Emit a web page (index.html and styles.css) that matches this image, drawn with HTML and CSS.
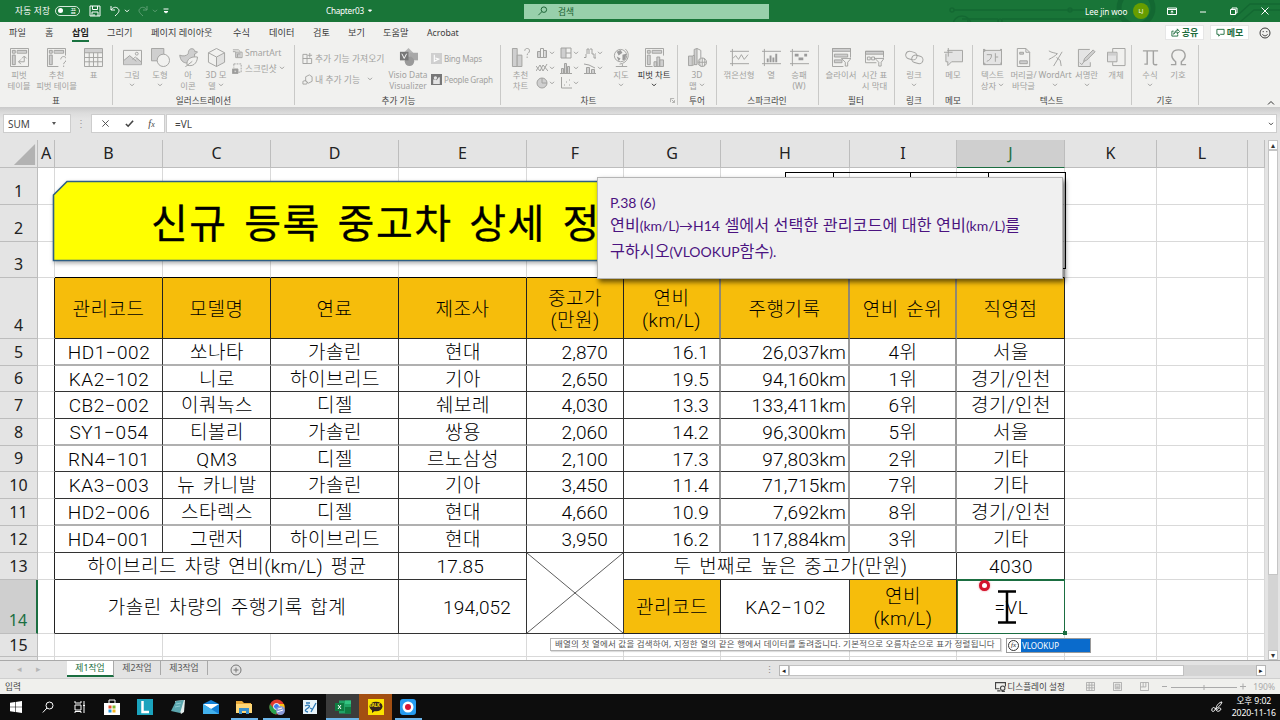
FILE: index.html
```html
<!DOCTYPE html>
<html lang="ko">
<head>
<meta charset="utf-8">
<title>Chapter03 - Excel</title>
<link rel="stylesheet" href="styles.css">
</head>
<body>
<svg class="defs" aria-hidden="true">
  <symbol id="chev" viewBox="0 0 6 4"><path d="M1 .8l2 2 2-2"/></symbol>
  <symbol id="bars" viewBox="0 0 12 12"><path class="f" d="M1.500 4.500h3v6h-3zM8.500 3.500h2v7h-2z"/><path d="M1.500 4.500h3v6h-3zM4.500 1.500h3v9h-3zM7.500 3.500h3v7h-3z"/></symbol>
</svg>
<div class="app">

<header class="titlebar">
  <svg class="deco" viewBox="0 0 340 22"><path d="M14 10H150M22 19H58M28 22a14 9 0 0 1 0-2M290 22l20-18h30M300 22l14-12h26M62 19H180M150 10l20 4"/><circle cx="12" cy="10" r="2"/><circle cx="130" cy="10" r="2"/><circle cx="22" cy="25" r="9"/><circle cx="196" cy="8" r="17" stroke-width="5"/><circle cx="60" cy="21" r="2"/></svg>
  <span class="autosave">자동 저장</span>
  <span class="toggle"><i></i><b>끔</b></span>
  <svg class="qa save" viewBox="0 0 12 12"><path d="M1 1h10v10H1zM3.500 1v3.500h5V1M3 11V7h6v4M5 9v2"/></svg>
  <svg class="qa undo" viewBox="0 0 12 12"><path d="M2 1v4h4M2 5c2-3 5-3.500 7-1.500s1 4-3 7.500"/></svg>
  <svg class="ch white"><use href="#chev"/></svg>
  <svg class="qa redo" viewBox="0 0 12 12"><path d="M10 1v4H6M10 5c-2-3-5-3.500-7-1.500s-1 4 3 7.500"/></svg>
  <svg class="ch dim"><use href="#chev"/></svg>
  <svg class="custom" viewBox="0 0 6 6"><path d="M.5 1h5M1 3.500l2 1.500 2-1.500z"/></svg>
  <span class="doc">Chapter03</span><svg class="ch white docch" viewBox="0 0 6 4"><path class="solid" d="M1.500 1h3L3 2.600z"/></svg>
  <div class="search"><svg viewBox="0 0 12 12"><circle cx="7.500" cy="4" r="3"/><path d="M5.300 6.200L1.500 10"/></svg><span>검색</span></div>
  <span class="user">Lee jin woo</span><span class="avatar">LJ</span>
  <div class="winbtns">
    <svg viewBox="0 0 10 10"><path d="M.5 2h9v6.500h-9zM.5 3.500h9M5 7.500V5M3.700 6L5 4.800 6.300 6"/></svg>
    <svg viewBox="0 0 10 10"><path d="M2 6h6"/></svg>
    <svg viewBox="0 0 10 10"><path d="M1.500 3.500h5v5h-5zM3 3.500V2h5v5H6.500"/></svg>
    <svg viewBox="0 0 10 10"><path d="M1.500 1.500l7 7M8.500 1.500l-7 7"/></svg>
  </div>
</header>

<nav class="tabs">
  <span class="t1">파일</span><span class="t2">홈</span><span class="t3 on">삽입</span><span class="t4">그리기</span><span class="t5">페이지 레이아웃</span><span class="t6">수식</span><span class="t7">데이터</span><span class="t8">검토</span><span class="t9">보기</span><span class="t10">도움말</span><span class="t11">Acrobat</span>
  <div class="tabright">
    <span class="share"><svg viewBox="0 0 10 10"><path d="M3 3.500H1v5.500h6.500V7M3 7c.5-3 2-4 4-4V1l2.500 3L7 6.500v-2C5.500 4.500 4 5 3 7z"/></svg>공유</span>
    <span class="share"><svg viewBox="0 0 10 10"><path d="M1 1.500h8v5.500H5L3 9V7H1z"/></svg>메모</span>
    <svg class="smile" viewBox="0 0 12 12"><circle cx="6" cy="6" r="5"/><path d="M3.500 7.300c1 2 4 2 5 0M4.200 4v1.200M7.800 4v1.200"/></svg>
  </div>
</nav>

<section class="ribbon">
  <div class="grp g1">
    <div class="items">
      <div class="it w38"><svg viewBox="0 0 20 20"><path class="f" d="M2 2h4v3H2zM8 2h10v3H8zM2 7h4v11H2z"/><path d="M.5.5h19v19H.5zM2.500 2.500h3v3h-3zM7.500 2.500h10v3h-10zM2.500 7.500h3v10h-3zM9 14.500h6V9M11.500 12L9 14.500l2.500 2.500M12.500 11L15 8.500l2.500 2.500"/></svg><p>피벗<br>테이블</p></div>
      <div class="it w37"><svg viewBox="0 0 20 20"><path class="f" d="M2 2h4v3H2zM8 2h10v3H8zM2 7h4v11H2z"/><path d="M12 19.500H.5V.5h19V8M2.500 2.500h3v3h-3zM7.500 2.500h10v3h-10zM2.500 7.500h3v10h-3zM14.500 12c0-4 6-4 6 0 0 3-3 2.500-3 5M17.500 18.500v1.500"/></svg><p>추천<br>피벗 테이블</p></div>
      <div class="it w37"><svg viewBox="0 0 20 20"><path class="f" d="M1 1h18v4H1z"/><path d="M.5.5h19v19H.5zM.5 5h19M.5 10h19M.5 14.500h19M5.500 5v14M10 5v14M14.500 5v14"/></svg><p>표</p></div>
    </div><h6>표</h6>
  </div>
  <div class="grp g2">
    <div class="items">
      <div class="it w28"><svg viewBox="0 0 20 20"><path d="M.5 2.500h19v15H.5z"/><path class="f" d="M1 13l6-5 5 4 3-2 4 4v3H1z"/><path d="M1 13l6-5 7 6M10 12l3-2.500 6 5"/><circle cx="14.500" cy="6" r="1.500"/></svg><p>그림<br><svg class="ch"><use href="#chev"/></svg></p></div>
      <div class="it w28"><svg viewBox="0 0 20 20"><path class="f s" d="M.5.5h13v13H.5z"/><circle class="w" cx="13" cy="13" r="6.500"/></svg><p>도형<br><svg class="ch"><use href="#chev"/></svg></p></div>
      <div class="it w28"><svg viewBox="0 0 20 20"><path class="f s" d="M.8 7.500c3 1.500 7 1 9-1.500 0-4 2-6 5-5 1.500.5 2 2 1.800 2.800l2.700.2c-.5 1.500-1.500 2-3 2.300 1 6-3 9.500-8 9.500-4 0-7-3-7.500-8.300z"/><path class="w" d="M8.500 18c-1-6 4-9.500 11-8.500-.5 7-5 10.500-11 8.500zM6.500 20l7.500-6"/></svg><p>아<br>이콘</p></div>
      <div class="it w28"><svg viewBox="0 0 20 20"><path class="f" d="M10 10l8.500-5v10L10 19.500z" opacity=".45"/><path d="M10 .5L18.500 5v10L10 19.500 1.500 15V5zM1.500 5l8.500 4.500L18.500 5M10 9.500v10"/></svg><p>3D 모<br>델 <svg class="ch"><use href="#chev"/></svg></p></div>
      <div class="col smart"><span><svg viewBox="0 0 12 10"><path class="f" d="M4 4h6v5H4z"/><path d="M1 1h6l2 2M1 3h3M4 3.500h7v6H4zM6 9V5.500h3"/></svg>SmartArt</span><span><svg viewBox="0 0 12 12"><path stroke-dasharray="2 1" d="M2 1h8v9H7M2 1v4"/><path class="d s" d="M.5 6.500h6v5h-6z"/><circle class="w" cx="3.500" cy="9" r="1.200"/></svg>스크린샷 <svg class="ch"><use href="#chev"/></svg></span></div>
    </div><h6>일러스트레이션</h6>
  </div>
  <div class="grp g3">
    <div class="items">
      <div class="col addin"><span><svg viewBox="0 0 12 12"><path d="M1 1.500h4.500v10H1zM1 6h9.500v5.500H1M8.500 0v5M6 2.500h5"/></svg>추가 기능 가져오기</span><span><svg viewBox="0 0 12 12"><path d="M4 3l4-2 3 2v5L7 10 4 8zM1 8l3-1 2 2-1 2H1z"/></svg>내 추가 기능 &nbsp;<svg class="ch"><use href="#chev"/></svg></span></div>
      <div class="it w46"><svg viewBox="0 0 20 20"><path class="m" d="M10 0l5 5-5 5-5-5z"/><path class="f2" d="M11 5h9v8h-9z"/><circle class="d" cx="11" cy="14" r="5"/><path class="dd" d="M1 4h9v9H1z"/><path class="wh" d="M3 6l2.500 5L8 6"/></svg><p>Visio Data<br>Visualizer</p></div>
      <div class="col bing"><span><svg viewBox="0 0 10 10"><path class="f" d="M0 0h10v10H0z"/><path class="wh" d="M3 1.500v6l4-2-3-1"/></svg>Bing Maps</span><span><svg viewBox="0 0 10 10"><path class="dd" d="M0 0h10v10H0z"/><circle class="l" cx="4" cy="3.500" r="1.500"/><path class="l" d="M2 9V5h3v1l2-3h1v6z"/></svg>People Graph</span></div>
    </div><h6>추가 기능</h6>
  </div>
  <div class="grp g4">
    <div class="items">
      <div class="it w30"><svg viewBox="0 0 20 20"><path class="f s" d="M1.500.5h5v19h-5z"/><path class="f s" d="M6.500 7.500h5v12h-5z"/><path d="M14.500 3c0-3.500 5-3.500 5 0 0 2.500-2.500 2-2.500 4.500M17 9v1.500"/></svg><p>추천<br>차트</p></div>
      <div class="minis">
        <span><svg><use href="#bars"/></svg><svg class="ch"><use href="#chev"/></svg></span>
        <span><svg viewBox="0 0 12 12"><path class="f" d="M1 1h5v10H1z"/><path d="M1 1h10v10H1zM6 1v10M6 6h5"/></svg><svg class="ch"><use href="#chev"/></svg></span>
        <span><svg viewBox="0 0 12 12"><path d="M0 10.500h2V7M3 7V2h2v5M6 2h2v5h2v4h2V6"/></svg><svg class="ch"><use href="#chev"/></svg></span>
        <span><svg viewBox="0 0 12 12"><path d="M0 9l4-6 3 6 4-7M0 4l4 5 3-6 5 6"/></svg><svg class="ch"><use href="#chev"/></svg></span>
        <span><svg viewBox="0 0 12 12"><path class="f s" d="M1.500 6.500h2v5h-2zM4.500 1.500h2v10h-2zM7.500 4.500h2v7h-2z"/><path d="M0 11.500h12"/></svg><svg class="ch"><use href="#chev"/></svg></span>
        <span><svg viewBox="0 0 12 12"><path class="f s" d="M2.500 5.500h3v6h-3zM7.500 7.500h3v4h-3z"/><path d="M0 2l5 1 6 3M0 11.500h12"/></svg><svg class="ch"><use href="#chev"/></svg></span>
        <span><svg viewBox="0 0 12 12"><circle class="f s" cx="6" cy="6" r="5"/><path d="M6 6V1M6 6h5"/></svg><svg class="ch"><use href="#chev"/></svg></span>
        <span><svg viewBox="0 0 12 12"><path d="M1.500 0v11H12M4 8h1M6 5h1M9 8h1M9 3h1"/></svg><svg class="ch"><use href="#chev"/></svg></span>
      </div>
      <div class="it w28"><svg viewBox="0 0 20 20"><circle class="w" cx="9" cy="8" r="6.500"/><path class="d" d="M5 4l4-2 2 3-4 3zM11 7l4-1-1 6-3 1zM5 9l4 2-2 3z"/><path d="M14 1c6 5 3 15-6 16M11 17v2M4 19.500h12"/></svg><p>지도<br><svg class="ch"><use href="#chev"/></svg></p></div>
      <div class="it w38 live"><svg viewBox="0 0 20 20"><path class="f s" d="M2.500 2.500h3v3h-3zM7.500 2.500h10v3h-10zM2.500 7.500h3v10h-3z"/><path d="M8 19.500H.5V.5h19V8"/><path class="f s" d="M9.500 14.500h3v5h-3zM12.500 9.500h3v10h-3zM15.500 12.500h4v7h-4z"/></svg><p>피벗 차트<br><svg class="ch"><use href="#chev"/></svg></p></div>
    </div><h6>차트</h6><svg class="launcher" viewBox="0 0 6 6"><path d="M.5 5V.5H5M2 2l3 3M5.500 2.500v3h-3"/></svg>
  </div>
  <div class="grp g5"><div class="items"><div class="it w38"><svg viewBox="0 0 20 20"><path class="f s" d="M.5 8.500h4v10h-4zM6.500 1.500l3-1v17h-3z"/><path d="M9.500.5l4 2v8M4.500 8.500l2-1v10l-2 1"/><circle class="w" cx="15" cy="15" r="4.500"/><path d="M10.500 15h9M15 10.500v9M13 11c-1 3-1 5 0 8M17 11c1 3 1 5 0 8"/></svg><p>3D<br>맵 <svg class="ch"><use href="#chev"/></svg></p></div></div><h6>투어</h6></div>
  <div class="grp g6"><div class="items">
      <div class="it w36"><svg viewBox="0 0 20 20"><path d="M0 3.500h20M0 16.500h20M2.500 1v18M3 11l3-3 3 4 3-5 3 5 4-5"/></svg><p>꺾은선형</p></div>
      <div class="it w28"><svg viewBox="0 0 20 20"><path d="M0 3.500h20M0 16.500h20M2.500 1v18"/><path class="d" d="M5 11h2v4H5zM8 8h2v7H8zM11 10h2v5h-2zM14 6h2v9h-2z"/></svg><p>열</p></div>
      <div class="it w28"><svg viewBox="0 0 20 20"><path d="M0 3.500h20M0 16.500h20M2.500 1v18"/><path class="d" d="M5 6h4v3H5zM9 10h3v3H9zM12 10h2v3h-2zM15 6h3v3h-3z"/></svg><p>승패<br>(W)</p></div>
    </div><h6>스파크라인</h6></div>
  <div class="grp g7"><div class="items">
      <div class="it w36"><svg viewBox="0 0 20 20"><path d="M12 19.500H.5V.5h19V10"/><path class="f s" d="M.5.500h19v3H.5zM2.500 6.500h14v3h-14zM2.500 12.500h8v3h-8z"/><path class="w" d="M10 11h10l-3.500 4v4H14v-4z"/></svg><p>슬라이서</p></div>
      <div class="it w30"><svg viewBox="0 0 20 20"><path class="f s" d="M.5 3.500h19v3H.5z"/><path d="M12 15.500H.5v-12h19V10M2.500 9.500h3v3h-3zM7 9.500h3v3H7z"/><path class="w" d="M10.500 11h9.500L17 15v4h-2.500v-4z"/></svg><p>시간 표<br>시 막대</p></div>
    </div><h6>필터</h6></div>
  <div class="grp g8"><div class="items"><div class="it w38"><svg viewBox="0 0 20 20"><rect x=".7" y="4" width="12" height="8" rx="4" transform="rotate(15 7 8)"/><rect x="7" y="8" width="12" height="8" rx="4" transform="rotate(15 13 12)"/></svg><p>링크<br><svg class="ch"><use href="#chev"/></svg></p></div></div><h6>링크</h6></div>
  <div class="grp g9"><div class="items"><div class="it w38"><svg viewBox="0 0 20 20"><path class="l s" d="M3.500 2.500h16v12H8l-4 4v-4H2V6"/><path d="M0 4.500h9M4.500 0v9"/></svg><p>메모</p></div></div><h6>메모</h6></div>
  <div class="grp g10"><div class="items">
      <div class="it w30"><svg viewBox="0 0 20 20"><path class="l s" d="M.5 2.500h19v15H.5z"/><path d="M4 7h5c0 4-2 6-5 7M13 5.500v9M13 9.500h3M0 1.500h2v2H0M18 1.500h2v2M0 16h2v2M18 16h2v2"/></svg><p>텍스트<br>상자 <svg class="ch"><use href="#chev"/></svg></p></div>
      <div class="it w30"><svg viewBox="0 0 20 20"><path d="M3.500.5h9l4 4v15h-13zM12.500.5v4h4"/><path class="f s" d="M6 4.500h4v2H6zM6 13.500h8v3H6z"/></svg><p>머리글/<br>바닥글</p></div>
      <div class="it w32"><svg viewBox="0 0 20 20"><path d="M3 3c3 2 6 2 9 3-2 2-5 4-9 6M17 4L8 19M11 10l4 3 1 6"/></svg><p>WordArt<br><svg class="ch"><use href="#chev"/></svg></p></div>
      <div class="it w30"><svg viewBox="0 0 20 20"><path class="l s" d="M14 19.500H1.500V1.500h12"/><path d="M14 15v4.500M3 15.500l2 2 3-4"/><path class="f s" d="M8 11l9-9 2 2-9 9-3 1z"/></svg><p>서명란<br><svg class="ch"><use href="#chev"/></svg></p></div>
      <div class="it w28"><svg viewBox="0 0 20 20"><path d="M6 5V.5h13v18H6V15"/><path class="l s" d="M.5 4.500h10v10H.5z"/><path class="f" d="M1 5h9v3H1z"/></svg><p>개체</p></div>
    </div><h6>텍스트</h6></div>
  <div class="grp g11"><div class="items">
      <div class="it w28"><svg viewBox="0 0 20 20"><path class="th" d="M2 3h16M6.500 3v14h-3M13 3v13c0 2 3 2 4 1"/></svg><p>수식<br><svg class="ch"><use href="#chev"/></svg></p></div>
      <div class="it w28"><svg viewBox="0 0 20 20"><path class="th" d="M2 17.500h5v-3C0 9 3 2 10 2s10 7 3 12.500v3h5"/></svg><p>기호</p></div>
    </div><h6>기호</h6></div>
  <svg class="collapse" viewBox="0 0 8 6"><path d="M1 4.500l3-3 3 3"/></svg>
</section>

<section class="fbar">
  <div class="name">SUM<i class="tri"></i></div><span class="dots">⋮</span>
  <div class="fx"><svg viewBox="0 0 10 10"><path d="M1.500 1.500l7 7M8.500 1.500l-7 7"/></svg><svg viewBox="0 0 10 10"><path class="bold" d="M1 5.500l2.500 2.500L9 2"/></svg><em>f<small>x</small></em></div>
  <div class="formula">=VL<svg class="ch"><use href="#chev"/></svg></div>
</section>

<main class="sheetwrap">
<div class="sheet">
  <table>
    <colgroup><col class="c38"><col class="c17"><col class="c108"><col class="c108"><col class="c128"><col class="c128"><col class="c97"><col class="c97"><col class="c129"><col class="c107"><col class="c108"><col class="c92"><col class="c91"><col class="c17"></colgroup>
    <tr class="head"><th class="corner"><svg viewBox="0 0 24 24"><path d="M23 1v22H1z"/></svg></th><th>A</th><th>B</th><th>C</th><th>D</th><th>E</th><th>F</th><th>G</th><th>H</th><th>I</th><th class="sel">J</th><th>K</th><th>L</th><th></th></tr>
    <tr class="r37"><th>1</th><td></td><td></td><td></td><td></td><td></td><td></td><td></td><td></td><td></td><td></td><td></td><td></td><td></td></tr>
    <tr class="r37"><th>2</th><td></td><td></td><td></td><td></td><td></td><td></td><td></td><td></td><td></td><td></td><td></td><td></td><td></td></tr>
    <tr class="r36"><th>3</th><td></td><td class="bt"></td><td class="bt"></td><td class="bt"></td><td class="bt"></td><td class="bt"></td><td class="bt"></td><td class="bt"></td><td class="bt"></td><td class="bt"></td><td></td><td></td><td></td></tr>
    <tr class="r61"><th>4</th><td class="e"></td><td class="o">관리코드</td><td class="o">모델명</td><td class="o">연료</td><td class="o">제조사</td><td class="o">중고가<br>(만원)</td><td class="o v">연비<br>(km/L)</td><td class="o v">주행기록</td><td class="o v">연비 순위</td><td class="o">직영점</td><td></td><td></td><td></td></tr>
    <tr class="r27 gy"><th>5</th><td class="e"></td><td class="k">HD1−002</td><td class="k">쏘나타</td><td class="k">가솔린</td><td class="k">현대</td><td class="k n f">2,870</td><td class="k n g v">16.1</td><td class="k n h v">26,037km</td><td class="k v">4위</td><td class="k">서울</td><td></td><td></td><td></td></tr>
    <tr class="r26"><th>6</th><td class="e"></td><td class="k">KA2−102</td><td class="k">니로</td><td class="k">하이브리드</td><td class="k">기아</td><td class="k n f">2,650</td><td class="k n g v">19.5</td><td class="k n h v">94,160km</td><td class="k v">1위</td><td class="k">경기/인천</td><td></td><td></td><td></td></tr>
    <tr class="r27"><th>7</th><td class="e"></td><td class="k">CB2−002</td><td class="k">이쿼녹스</td><td class="k">디젤</td><td class="k">쉐보레</td><td class="k n f">4,030</td><td class="k n g v">13.3</td><td class="k n h v">133,411km</td><td class="k v">6위</td><td class="k">경기/인천</td><td></td><td></td><td></td></tr>
    <tr class="r27 gy"><th>8</th><td class="e"></td><td class="k">SY1−054</td><td class="k">티볼리</td><td class="k">가솔린</td><td class="k">쌍용</td><td class="k n f">2,060</td><td class="k n g v">14.2</td><td class="k n h v">96,300km</td><td class="k v">5위</td><td class="k">서울</td><td></td><td></td><td></td></tr>
    <tr class="r26"><th>9</th><td class="e"></td><td class="k">RN4−101</td><td class="k">QM3</td><td class="k">디젤</td><td class="k">르노삼성</td><td class="k n f">2,100</td><td class="k n g v">17.3</td><td class="k n h v">97,803km</td><td class="k v">2위</td><td class="k">기타</td><td></td><td></td><td></td></tr>
    <tr class="r27"><th>10</th><td class="e"></td><td class="k">KA3−003</td><td class="k">뉴 카니발</td><td class="k">가솔린</td><td class="k">기아</td><td class="k n f">3,450</td><td class="k n g v">11.4</td><td class="k n h v">71,715km</td><td class="k v">7위</td><td class="k">기타</td><td></td><td></td><td></td></tr>
    <tr class="r26 gy"><th>11</th><td class="e"></td><td class="k">HD2−006</td><td class="k">스타렉스</td><td class="k">디젤</td><td class="k">현대</td><td class="k n f">4,660</td><td class="k n g v">10.9</td><td class="k n h v">7,692km</td><td class="k v">8위</td><td class="k">경기/인천</td><td></td><td></td><td></td></tr>
    <tr class="r27"><th>12</th><td class="e"></td><td class="k">HD4−001</td><td class="k">그랜저</td><td class="k">하이브리드</td><td class="k">현대</td><td class="k n f">3,950</td><td class="k n g v">16.2</td><td class="k n h v">117,884km</td><td class="k v">3위</td><td class="k">기타</td><td></td><td></td><td></td></tr>
    <tr class="r27"><th>13</th><td class="e"></td><td class="k" colspan="3">하이브리드 차량 연비(km/L) 평균</td><td class="k n e1">17.85</td><td class="k x" rowspan="2"><svg viewBox="0 0 96 80" preserveAspectRatio="none"><path d="M0 0l96 80M96 0L0 80"/></svg></td><td class="k" colspan="3">두 번째로 높은 중고가(만원)</td><td class="k">4030</td><td></td><td></td><td></td></tr>
    <tr class="r54"><th class="sel">14</th><td class="e"></td><td class="k" colspan="3">가솔린 차량의 주행기록 합계</td><td class="k n e2">194,052</td><td class="o">관리코드</td><td class="k">KA2−102</td><td class="o">연비<br>(km/L)</td><td class="k act">=VL</td><td></td><td></td><td></td></tr>
    <tr class="r23"><th>15</th><td></td><td></td><td></td><td></td><td></td><td></td><td></td><td></td><td></td><td></td><td></td><td></td><td></td></tr>
    <tr class="r4"><th></th><td></td><td></td><td></td><td></td><td></td><td></td><td></td><td></td><td></td><td></td><td></td><td></td><td></td></tr>
  </table>
  <svg class="banner" viewBox="0 0 560 90"><path class="fill" d="M1.500 15L15 1.500H560V80.500H1.500z"/></svg>
  <div class="bannertext">신규 등록 중고차 상세 정</div>
  <div class="stamp"><i></i><i></i><i></i><i></i></div>
  <div class="note"><p><span>P.38 (6)</span></p><p>연비<span>(km/L)→H14</span> 셀에서 선택한 관리코드에 대한 연비<span>(km/L)</span>를</p><p>구하시오<span>(VLOOKUP</span>함수<span>).</span></p></div>
  <svg class="ibeam" viewBox="0 0 20 34"><path d="M1 1.500h18M1 32.500h18M10 1v32"/></svg>
  <i class="ring"></i><i class="handle"></i>
  <div class="tip">배열의 첫 열에서 값을 검색하여, 지정한 열의 같은 행에서 데이터를 돌려줍니다. 기본적으로 오름차순으로 표가 정렬됩니다</div>
  <div class="auto"><b><i>fx</i></b><span>VLOOKUP</span></div>
</div>
<aside class="vscroll"><span class="up">▴</span><span class="thumb"></span><span class="space"></span><span class="dn">▾</span></aside>
</main>

<section class="sheettabs">
  <span class="arr a1">◂</span><span class="arr a2">▸</span><span class="st on">제1작업</span><span class="st">제2작업</span><span class="st">제3작업</span>
  <svg class="plus" viewBox="0 0 12 12"><circle cx="6" cy="6" r="5"/><path d="M3.500 6h5M6 3.500v5"/></svg>
  <span class="grip">⋮</span><div class="hscroll"><b>◂</b><i></i><u></u><b>▸</b></div>
</section>
<footer class="status"><span>입력</span>
  <div class="sright"><svg class="disp" viewBox="0 0 10 10"><path d="M4 7H.5V1.500h9V5M2 9h3"/><circle cx="7" cy="6.500" r="2"/><path d="M6 9.500h3"/></svg><span>디스플레이 설정</span>
  <svg class="view" viewBox="0 0 10 10"><path d="M.5.500h9v9h-9zM.5 3.500h9M.5 6.500h9M3.500.5v9M6.500.5v9"/></svg><svg class="view" viewBox="0 0 10 10"><path d="M.5.500h9v9h-9zM2.500 2.500h5v5h-5zM3.500 4.500h3M3.500 6h3"/></svg><svg class="view" viewBox="0 0 10 10"><path d="M.5.500h9v9h-9zM3.500.5v5h3v-5M.5 5.500h3"/></svg>
  <svg class="zoombar" viewBox="0 0 86 10"><path d="M1 4.500h5M10 5.500h66M43 3v5M79 4.500h6M82 1.500v6"/></svg><em>190%</em></div>
</footer>

<footer class="taskbar">
  <span class="tk"><svg viewBox="0 0 12 12"><path class="wf" d="M0 1.700l5-.7v4.700H0zM5.600.9L12 0v5.700H5.600zM0 6.300h5V11l-5-.7zM5.600 6.300H12V12l-6.400-.9z"/></svg></span>
  <span class="tk"><svg viewBox="0 0 12 12"><circle cx="7.500" cy="4.500" r="3.500"/><path d="M5 7L.8 11.500"/></svg></span>
  <span class="tk"><svg viewBox="0 0 12 12"><path d="M1 4h6v5H1zM1 0v2h6V0M1 12v-1.500h6V12M10 0v3M10 6v6"/><path class="wf" d="M9 3.500h2v2H9z"/></svg></span>
  <span class="tk b"><svg viewBox="0 0 16 16"><path d="M5 4V1h6v3"/><path class="wf" d="M0 4h16v12H0z"/><path fill="#e74c2c" stroke="none" d="M4.500 6.500h3v3h-3z"/><path fill="#7eb72e" stroke="none" d="M8.500 6.500h3v3h-3z"/><path fill="#2496dc" stroke="none" d="M4.500 10.500h3v3h-3z"/><path fill="#f4b51e" stroke="none" d="M8.500 10.500h3v3h-3z"/></svg></span>
  <span class="tk b"><svg viewBox="0 0 16 16"><path fill="#1aa3bd" stroke="none" d="M0 0h16v16H0z"/><path stroke-width="2.500" d="M5.500 2v11H12"/></svg></span>
  <span class="tk b"><svg viewBox="0 0 16 16"><path fill="#e4eeee" stroke="none" d="M5 2l10-1-1 12-3 2z"/><path fill="#5ba6ae" stroke="none" d="M1 12L6 2l8-1-4 13z"/><path stroke="#8fcbd1" d="M6 5l5-1M5 8l5-1"/></svg></span>
  <span class="tk b"><svg viewBox="0 0 16 16"><path fill="#1481d7" stroke="none" d="M0 5l8-4 8 4v10H0z"/><path fill="#fff" stroke="none" d="M0 5h16l-8 5z"/><path fill="#42b1ed" stroke="none" d="M0 5l16 10H0z"/></svg></span>
  <span class="tk b run"><svg viewBox="0 0 16 16"><path fill="#e8a93b" stroke="none" d="M0 2h6l2 2h7v5H0z"/><path fill="#ffd777" stroke="none" d="M0 5h16v9H0z"/><path fill="#3b91cd" stroke="none" d="M3 9h10v6h-3v-3H6v3H3z"/></svg></span>
  <span class="tk b run"><svg viewBox="0 0 16 16"><circle fill="#e33b2e" stroke="none" cx="8" cy="8" r="7.500"/><path fill="#2ba24c" stroke="none" d="M1 5a7.500 7.500 0 0 0 6 10.500l3-6-6-1z"/><path fill="#fbc116" stroke="none" d="M8 5h7a7.500 7.500 0 0 1-6 10.500l3-7z"/><circle fill="#3b7ded" stroke="#fff" cx="7.500" cy="7.500" r="3"/><circle fill="#8b9bd8" stroke="none" cx="11.500" cy="11.500" r="4.500"/><path d="M8 13l6-2M9 10l4-1"/></svg></span>
  <span class="tk b"><svg viewBox="0 0 16 16"><path fill="#e7f3f9" stroke="none" d="M1 1h14v14H1z"/><path stroke="#2c78b5" stroke-width="1.300" d="M4 4h4M3 7c4-2 6 0 3 2s-4 3 0 4M9 13l5-9M8 9l2 1"/></svg></span>
  <span class="tk b run xl"><svg viewBox="0 0 16 16"><path fill="#21a366" stroke="none" d="M4 1.500h12v13H4z"/><path fill="#33c481" stroke="none" d="M10 1.500h6V5h-6z"/><path fill="#107c41" stroke="none" d="M0 4h9v8H0zM10 8h6v6.500h-6z"/><path d="M3 6l3 4M6 6l-3 4"/></svg></span>
  <span class="tk b kt"><svg viewBox="0 0 16 16"><path fill="#fbe300" stroke="none" d="M0 0h16v16H0z"/><ellipse cx="8" cy="7.500" rx="6.500" ry="4.800" fill="#33221c" stroke="none"/><path fill="#33221c" stroke="none" d="M4 10v4l4-3z"/></svg><small>TALK</small></span>
  <span class="tk b run"><svg viewBox="0 0 16 16"><rect width="16" height="16" rx="3" fill="#259cf1" stroke="none"/><circle cx="8" cy="8" r="5.500" fill="#fff" stroke="none"/><circle cx="8" cy="8" r="3" fill="#d61435" stroke="none"/></svg></span>
  <div class="tray"><svg viewBox="0 0 12 12"><path d="M1 8c1-3 4-1 3 1s-4 2-3-1M4 8c3-1 6-4 7-7-3 0-6 4-6 7s4 3 5 0c-1-2-3-1-4 1"/></svg><div class="clock"><span>오후 9:02</span><span>2020-11-16</span></div></div>
</footer>
</div>
</body>
</html>
```

FILE: styles.css
```css
* { box-sizing: border-box; }
body { margin: 0; font-family: "Noto Sans", "Noto Sans CJK KR", sans-serif; color: #333; }
.app { width: 1280px; height: 720px; overflow: hidden; display: flex; flex-direction: column; background: #e4e4e4; white-space: nowrap; }
.defs { position: absolute; width: 0; height: 0; }
svg { fill: none; stroke: currentColor; flex: none; display: block; }
p, h6 { margin: 0; }
.ch { width: 6px; height: 4px; display: inline-block; }

.titlebar { height: 22px; flex: none; background: #197538; color: #fff; display: flex; align-items: center; font-size: 8.700px; position: relative; padding: 0 0 1px 15px; }
.deco { position: absolute; left: 940px; top: 0; width: 340px; height: 22px; stroke: #0d5a2b; stroke-width: 1.500; opacity: .45; }
.autosave { width: 40px; letter-spacing: .2px; }
.toggle { width: 25px; height: 10px; border: 1px solid #d4e8da; border-radius: 6px; display: flex; align-items: center; justify-content: space-between; padding: 0 3px 0 2px; font-size: 6px; }
.toggle i { width: 5px; height: 5px; border-radius: 3px; background: #fff; }
.toggle b { font-weight: 400; }
.qa { width: 12px; height: 12px; }
.save { margin-left: 9px; }
.undo { margin: 0 3px 0 8px; }
.redo { margin: 0 3px 0 7px; opacity: .3; }
.dim { opacity: .3; }
.custom { width: 6px; height: 6px; margin-left: 5px; }
.doc { margin-left: 157px; width: 38px; font-size: 8.200px; letter-spacing: -.25px; }
.docch { margin-left: 3px; }
.solid { fill: #fff; }
.search { position: absolute; left: 524px; top: 4px; width: 245px; height: 15px; background: #98d0ab; color: #155d2e; display: flex; align-items: center; gap: 10px; padding-left: 13px; }
.search svg { width: 11px; height: 11px; }
.user { position: absolute; left: 1085px; top: 6px; font-size: 8.200px; letter-spacing: -.1px; }
.avatar { position: absolute; left: 1133px; top: 3px; width: 16px; height: 16px; border-radius: 8px; background: #679d00; font-size: 6px; display: grid; place-items: center; }
.winbtns { position: absolute; right: 10px; top: 6px; display: flex; gap: 21px; }
.winbtns svg { width: 10px; height: 10px; }

.tabs { height: 21px; flex: none; background: #f1f1ef; display: flex; align-items: center; font-size: 9.200px; padding-left: 9px; position: relative; color: #3c3c3c; }
.tabs > span { height: 19px; line-height: 20px; }
.t1 { width: 36px; } .t2 { width: 27px; } .t3 { width: 17px; margin-right: 18px; } .t4 { width: 44px; } .t5 { width: 82px; } .t6 { width: 36px; } .t7 { width: 44px; } .t8 { width: 35px; } .t9 { width: 35px; } .t10 { width: 44px; }
.t11 { font-size: 8.700px; }
.tabs .on { font-weight: 700; border-bottom: 2px solid #1a7340; color: #222; }
.tabright { position: absolute; right: 9px; top: 3px; display: flex; gap: 6px; align-items: center; }
.share { width: 39px; height: 15px; background: #fff; color: #1c6b3c; font-weight: 700; font-size: 9px; display: flex; align-items: center; justify-content: center; gap: 2px; border: 1px solid #e6e6e6; }
.share svg { width: 9px; height: 9px; }
.smile { width: 12px; height: 12px; margin-left: 4px; }

.ribbon { height: 64px; flex: none; background: #f1f1ef; display: flex; position: relative; font-size: 8.500px; color: #a2a2a0; }
.grp { height: 60px; border-right: 1px solid #c9c9c7; margin-top: 2px; display: flex; flex-direction: column; position: relative; }
.g1 { width: 113px; } .g2 { width: 182px; padding-left: 5px; } .g3 { width: 206px; padding-left: 7px; } .g4 { width: 177px; padding-left: 4px; } .g5 { width: 39px; } .g6 { width: 102px; padding-left: 4px; } .g7 { width: 76px; padding-left: 4px; } .g8 { width: 39px; } .g9 { width: 39px; } .g10 { width: 159px; padding-left: 4px; } .g11 { width: 67px; padding-left: 4px; }
.items { display: flex; height: 50px; flex: none; padding-top: 3px; }
.it { display: flex; flex-direction: column; align-items: center; }
.it > svg { width: 19px; height: 19px; }
.it p { line-height: 10.500px; margin-top: 3px; text-align: center; font-size: 8.400px; }
.it .ch { vertical-align: 2px; }
.w28 { width: 28px; } .w30 { width: 31px; } .w32 { width: 32px; } .w36 { width: 36px; } .w37 { width: 37px; } .w38 { width: 38px; } .w46 { width: 46px; }
.live p { color: #333; }
.f { fill: #cfcfcf; stroke: none; } .m { fill: #b5b5b5; stroke: none; } .f2 { fill: #a8a8a8; stroke: none; } .d { fill: #9a9a9a; stroke: none; } .dd { fill: #777; stroke: none; } .l { fill: #e4e4e4; stroke: none; } .w { fill: #f1f1ef; }
.s { stroke: currentColor; } .wh { stroke: #fff; } .th { stroke-width: 1.500; }
.grp h6 { font-size: 8.600px; font-weight: 400; color: #444; line-height: 13px; text-align: center; }
.g2 h6, .g3 h6, .g4 h6, .g10 h6, .g11 h6, .g6 h6, .g7 h6 { margin-left: -5px; }
.col { display: flex; flex-direction: column; }
.col > span { display: flex; align-items: center; gap: 2px; }
.col > span > svg:first-child { width: 11px; height: 11px; }
.smart { padding: 0 0 0 2px; gap: 3px; margin-top: -1px; font-size: 8.600px; } .smart > span { height: 12px; }
.addin { width: 83px; gap: 9px; padding-top: 4px; } .addin > span { height: 12px; font-size: 8.800px; }
.bing { gap: 9px; padding-top: 4px; } .bing > span { height: 12px; font-size: 8.100px; letter-spacing: -.25px; }
.minis { width: 71px; display: grid; grid-template-columns: 24px 24px 24px; grid-auto-rows: 15px; margin-top: -3px; }
.minis span { display: flex; align-items: center; gap: 1px; }
.minis svg:first-child { width: 12px; height: 12px; }
.launcher { position: absolute; right: 2px; bottom: 2px; width: 5px; height: 5px; }
.collapse { position: absolute; right: 5px; bottom: 1px; width: 8px; height: 6px; color: #333; }

.fbar { height: 33px; flex: none; background: linear-gradient(#cacaca, #dcdcdc 6px, #e4e4e4 12px); display: flex; padding: 7px 3px 7px 3px; font-size: 10px; color: #444; }
.fbar > div { background: #fff; border: 1px solid #cdcdcd; height: 19px; display: flex; align-items: center; }
.name { width: 68px; padding: 0 14px 0 4px; justify-content: space-between; }
.tri { border: 2.500px solid transparent; border-top: 3px solid #555; border-bottom: 0; }
.dots { width: 20px; text-align: center; color: #999; line-height: 18px; }
.fx { width: 74px; justify-content: space-around; padding: 0 2px; }
.fx svg { width: 9px; height: 9px; } .bold { stroke-width: 1.800; }
.fx em { font-family: "Liberation Serif", serif; font-size: 10px; } .fx small { font-size: 8px; }
.formula { flex: 1; margin-left: 1px; padding: 0 2px 0 8px; justify-content: space-between; font-size: 10px; }

.sheetwrap { height: 520px; flex: none; display: flex; }
.sheet { width: 1265px; height: 520px; position: relative; background: #fff; overflow: hidden; }
table { table-layout: fixed; width: 1265px; border-collapse: separate; border-spacing: 0; }
.c38 { width: 38px; } .c17 { width: 17px; } .c108 { width: 108px; } .c128 { width: 128px; } .c97 { width: 97px; } .c129 { width: 129px; } .c107 { width: 107px; } .c92 { width: 92px; } .c91 { width: 91px; }
th, td { padding: 0; border-right: 1px solid #d9d9d9; border-bottom: 1px solid #d9d9d9; overflow: hidden; }
th { font-weight: 400; font-size: 16px; line-height: 21px; background: #e4e4e4; color: #222; border-color: #bdbdbd; vertical-align: bottom; padding-bottom: 2px; }
.head { height: 28px; }
.head th { vertical-align: middle; padding: 0; }
.head .sel { background: #cfcfcf; color: #1b6e41; border-bottom: 1px solid #1b6e41; border-right: 1px solid #bdbdbd; }
.corner svg { width: 23px; height: 23px; margin: 2px 0 0 13px; stroke: none; fill: #b2b2b2; }
th.sel { background: #cfcfcf; color: #1b6e41; border-right: 2px solid #1b6e41; }
.r37 { height: 37px; } .r36 { height: 36px; } .r61 { height: 61px; } .r27 { height: 27px; } .r26 { height: 26px; } .r54 { height: 54px; } .r23 { height: 23px; } .r4 { height: 4px; }
.r4 th, .r4 td { padding: 0; }
.r23 th { padding: 0; }
td { font-family: Roboto, "Noto Sans CJK KR", sans-serif; font-weight: 300; font-size: 19px; line-height: 22px; text-align: center; color: #000; letter-spacing: .5px; word-spacing: 2.500px; padding-top: 2px; }
td.o { background: #f6bd0b; border-color: #222; padding-top: 3px; }
td.k { border-color: #333; padding-left: 1px; }
td.bt { border-bottom-color: #000; }
td.e { border-right-color: #222; }
td.v { border-right: 2px solid #8f8873; }
td.k.v { border-right-color: #9c9c9c; }
.gy td.k { border-bottom: 2px solid #b0b0b0; padding-top: 3px; }
td.n { text-align: right; letter-spacing: .15px; }
td.f { padding-right: 15px; } td.g { padding-right: 10px; } td.h { padding-right: 2px; } td.e1 { padding-right: 42px; } td.e2 { padding-right: 15px; }
td.k.x { padding: 0; }
td.x svg { width: 96px; height: 80px; stroke-width: .8; stroke: #333; }
td.act { border: 1px solid #1b6e41; box-shadow: 0 -1px 0 #1b6e41; }
.banner { position: absolute; left: 52px; top: 40px; width: 560px; height: 90px; stroke: #2f5f86; stroke-width: 1.600; filter: drop-shadow(1px 2px 2px #0005); }
.fill { fill: #ff0; }
.bannertext { position: absolute; left: 151px; top: 53px; font: 400 40px/56px "Noto Sans CJK KR", sans-serif; letter-spacing: 1.500px; word-spacing: 4px; color: #000; -webkit-text-stroke: .3px #000; }
.stamp { position: absolute; left: 785px; top: 32px; width: 281px; height: 97px; border: 1.500px solid #000; display: grid; grid-template-columns: 47px 77px 78px 1fr; }
.stamp i + i { border-left: 1.500px solid #000; }
.note { position: absolute; left: 597px; top: 37px; width: 466px; height: 102px; background: #f0f0f0; border: 1px solid #b5b5b5; box-shadow: 2px 3px 5px #0009; padding: 11px 0 0 12px; color: #4b1380; font: 400 16.200px/26px "Noto Sans CJK KR", sans-serif; }
.note p { height: 26px; }
.note p:first-child { line-height: 24px; height: 22px; }
.note span { font-family: Lato, "Noto Sans", sans-serif; font-size: 14px; line-height: 20px; letter-spacing: -.05px; }
.ibeam { position: absolute; left: 997px; top: 450px; width: 20px; height: 34px; stroke: #000; stroke-width: 2.500; }
.ring { position: absolute; left: 979px; top: 440px; width: 11px; height: 11px; border: 3px solid #d3142c; border-radius: 6px; background: #fff; box-shadow: 0 0 2px #d3142c88; }
.handle { position: absolute; left: 1063px; top: 491px; width: 4px; height: 4px; background: #1b6e41; }
.tip { position: absolute; left: 550px; top: 498px; width: 451px; height: 13px; border: 1px solid #b5b5b5; background: #fff; box-shadow: 1px 1px 1px #0002; font-size: 8.500px; letter-spacing: .2px; line-height: 10px; padding-left: 4px; color: #555; }
.auto { position: absolute; left: 1006px; top: 498px; width: 85px; height: 15px; border: 1px solid #9a9a9a; background: #0a6bcc; display: flex; align-items: center; color: #fff; font-size: 8px; line-height: 12px; }
.auto b { width: 14px; height: 13px; background: #fff; color: #222; padding: 1px; font-weight: 400; }
.auto b i { display: block; width: 11px; height: 11px; border: 1px solid #333; border-radius: 6px; font: italic 7px/8px "Liberation Serif", serif; text-align: center; }
.auto span { padding-left: 1px; }
.vscroll { width: 15px; display: flex; flex-direction: column; padding: 0 2px 0 3px; font-size: 8px; background: #e4e4e4; align-items: stretch; text-align: center; }
.up, .dn { height: 10px; line-height: 8px; background: #fff; border: 1px solid #c5c5c5; }
.thumb { height: 425px; background: #fff; border: 1px solid #c5c5c5; }
.space { flex: 1; background: #d4d4d4; }

.sheettabs { height: 19px; flex: none; border-top: 1px solid #a9a9a9; border-bottom: 1px solid #cfcfcf; background: #e3e3e3; display: flex; font-size: 8.800px; align-items: flex-start; line-height: 15px; color: #555; padding-left: 17px; }
.arr { color: #b5b5b5; width: 19px; line-height: 16px; }
.a2 { width: 31px; }
.st { height: 14px; width: 47px; text-align: center; border-right: 1px solid #a9a9a9; }
.st.on { width: 47px; height: 16px; color: #1b6e41; background: #fff; border-bottom: 2px solid #1b6e41; }
.plus { width: 12px; height: 12px; margin: 3px 0 0 22px; color: #777; }
.grip { margin-left: 523px; width: 14px; color: #888; line-height: 18px; }
.hscroll { display: flex; margin-top: 4px; height: 11px; width: 487px; font-size: 7px; line-height: 9px; }
.hscroll b { width: 10px; background: #fff; border: 1px solid #b5b5b5; font-weight: 400; text-align: center; color: #222; }
.hscroll i { width: 395px; background: #fff; border: 1px solid #c2c2c2; }
.hscroll u { flex: 1; background: #d4d4d4; }
.status { height: 15px; flex: none; background: #f0f0ed; display: flex; justify-content: space-between; align-items: center; font-size: 8.600px; padding: 0 5px; color: #444; }
.sright { display: flex; align-items: center; }
.disp { width: 11px; height: 11px; margin-right: 1px; }
.view { width: 9px; height: 9px; margin-right: 18px; color: #aaa; }
.sright span { width: 60px; margin-right: 19px; }
.zoombar { width: 86px; height: 10px; color: #aaa; margin-left: -6px; }
.sright em { font-style: normal; color: #aaa; margin-left: 6px; font-size: 8.500px; }

.taskbar { flex: 1; background: #0d0d0d; display: flex; color: #fff; position: relative; }
.tk { width: 32px; display: grid; place-items: center; position: relative; }
.tk svg { width: 12px; height: 12px; }
.b { width: 32.900px; } .b svg { width: 16px; height: 16px; }
.run { padding-top: 2px; background: linear-gradient(#6cb5ea, #6cb5ea) bottom / 27px 2px no-repeat; padding-bottom: 2px; }
.xl { background: linear-gradient(#6cb5ea, #6cb5ea) bottom / 100% 2px no-repeat #3c3c3c; }
.kt { background: #a34f12; }
.kt small { position: absolute; left: 10px; top: 8px; font-size: 4.500px; font-weight: 700; color: #fbe300; }
.wf { fill: #fff; stroke: none; }
.tray { margin-left: auto; display: flex; align-items: center; gap: 9px; padding-right: 4px; }
.tray svg { width: 12px; height: 12px; }
.clock { display: flex; flex-direction: column; align-items: center; font-size: 8.700px; line-height: 12px; letter-spacing: -.1px; }
```
